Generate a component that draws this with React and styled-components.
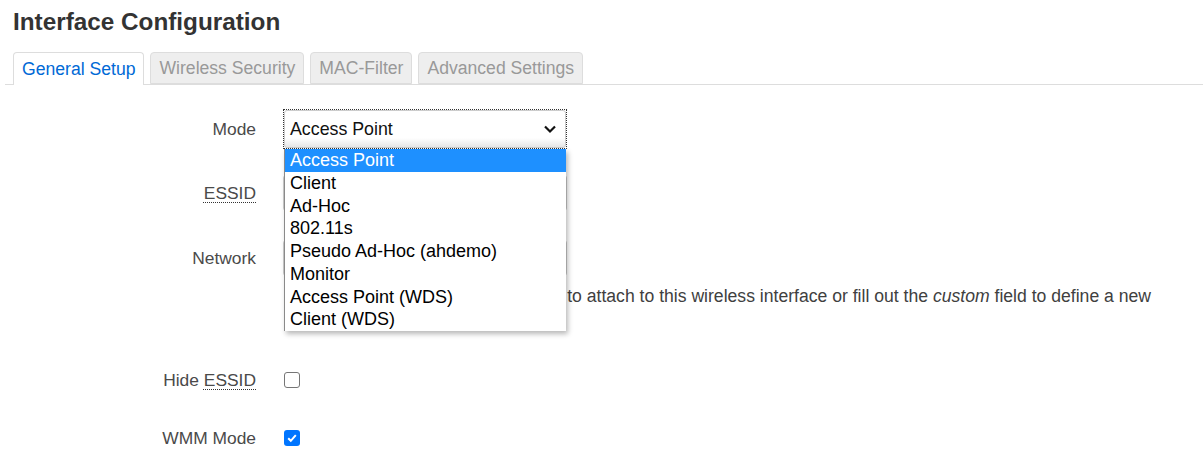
import React from "react";
import styled, { createGlobalStyle } from "styled-components";

const Global = createGlobalStyle`
  html, body { margin: 0; padding: 0; background: #fff; }
  body { font-family: "Liberation Sans", Arial, sans-serif; color: #404040; overflow: hidden; }
  * { box-sizing: border-box; }
`;

const Page = styled.div`
  width: 1203px;
  height: 459px;
  overflow: hidden;
`;

const Title = styled.h2`
  margin: 0;
  padding: 8px 0 0 13px;
  height: 52px;
  font-size: 24.3px;
  font-weight: bold;
  color: #333;
  line-height: 27px;
`;

const TabBar = styled.ul`
  list-style: none;
  margin: 0 0 0 5px;
  padding: 0 0 0 8px;
  display: flex;
  gap: 6px;
  border-bottom: 1px solid #ddd;
  height: 33px;
`;

const Tab = styled.li`
  height: ${(p) => (p.$active ? "33px" : "32px")};
  padding: 0 8px;
  display: flex;
  align-items: center;
  font-size: 17.6px;
  border: 1px solid #ddd;
  border-bottom: ${(p) => (p.$active ? "none" : "1px solid #ddd")};
  border-radius: 4px 4px 0 0;
  background: ${(p) => (p.$active ? "#fff" : "#eee")};
  color: ${(p) => (p.$active ? "#0069d6" : "#999")};
`;

const Form = styled.div`
  padding-top: 24px;
`;

const Row = styled.div`
  display: grid;
  grid-template-columns: 256px 1fr;
  column-gap: 27px;
  align-items: center;
  margin-top: ${(p) => p.$mt || 0}px;
  height: ${(p) => p.$h}px;
`;

const Label = styled.div`
  text-align: right;
  font-size: 17.4px;
  color: #4a4a4a;
`;

const Abbr = styled.span`
  text-decoration: underline dotted #333;
  text-underline-offset: 3px;
  text-decoration-thickness: 1px;
`;

const SelectWrap = styled.div`
  position: relative;
  width: 284px;
  height: 40px;
  outline: 1px dotted #333;
  outline-offset: -1px;
  padding: 1px;
`;

const SelectBox = styled.div`
  height: 100%;
  border: 1px solid #ccc;
  border-radius: 3px;
  background: linear-gradient(#fff 0%, #fff 75%, #e6e6e6 100%);
  display: flex;
  align-items: center;
  justify-content: space-between;
  padding: 0 8px 0 5px;
  font-size: 17.8px;
  color: #111;
`;

const Chevron = styled.svg`
  width: 14px;
  height: 10px;
`;

const Listbox = styled.ul`
  position: absolute;
  top: 40px;
  left: 1px;
  width: 282px;
  margin: 0;
  padding: 0;
  list-style: none;
  background: #fff;
  border-left: 1px solid #8a8a8a;
  box-shadow: 2px 3px 5px rgba(0, 0, 0, 0.28);
  z-index: 10;
`;

const Option = styled.li`
  height: 22.75px;
  line-height: 22.75px;
  padding-left: 5px;
  font-size: 18px;
  white-space: nowrap;
  background: ${(p) => (p.$selected ? "#1e90ff" : "transparent")};
  color: ${(p) => (p.$selected ? "#fff" : "#000")};
`;

const TextInput = styled.div`
  width: 284px;
  height: 36px;
  border: 1px solid #ccc;
  border-radius: 3px;
  background: #fff;
`;

const Description = styled.div`
  grid-column: 2;
  font-size: 17.6px;
  line-height: 22px;
  color: #404040;
  padding: 0 20px 0 27px;
`;

const Check = styled.span`
  width: 16px;
  height: 16px;
  margin-left: 1px;
  border-radius: 3px;
  display: inline-flex;
  align-items: center;
  justify-content: center;
  border: ${(p) => (p.$checked ? "none" : "1px solid #767676")};
  background: ${(p) => (p.$checked ? "#0075ff" : "#fff")};
`;

const options = [
  "Access Point",
  "Client",
  "Ad-Hoc",
  "802.11s",
  "Pseudo Ad-Hoc (ahdemo)",
  "Monitor",
  "Access Point (WDS)",
  "Client (WDS)",
];

export default function App() {
  return (
    <Page>
      <Global />
      <Title>Interface Configuration</Title>
      <TabBar>
        <Tab $active>General Setup</Tab>
        <Tab>Wireless Security</Tab>
        <Tab>MAC-Filter</Tab>
        <Tab>Advanced Settings</Tab>
      </TabBar>
      <Form>
        <Row $h={40}>
          <Label>Mode</Label>
          <SelectWrap>
            <SelectBox>
              <span>Access Point</span>
              <Chevron viewBox="0 0 14 10">
                <path d="M2 2.5 L7 7.5 L12 2.5" fill="none" stroke="#111" strokeWidth="2.2" />
              </Chevron>
            </SelectBox>
            <Listbox>
              {options.map((o, i) => (
                <Option key={o} $selected={i === 0}>{o}</Option>
              ))}
            </Listbox>
          </SelectWrap>
        </Row>
        <Row $h={36} $mt={26}>
          <Label><Abbr>ESSID</Abbr></Label>
          <TextInput />
        </Row>
        <Row $h={36} $mt={29}>
          <Label>Network</Label>
          <TextInput />
        </Row>
        <Row $mt={9}>
          <Description>
            Choose the network(s) you want to attach to this wireless interface or fill out the <em>custom</em> field to define a new network.
          </Description>
        </Row>
        <Row $h={36} $mt={33}>
          <Label>Hide <Abbr>ESSID</Abbr></Label>
          <Check />
        </Row>
        <Row $h={36} $mt={22}>
          <Label>WMM Mode</Label>
          <Check $checked>
            <svg width="12" height="12" viewBox="0 0 12 12">
              <path d="M2.2 6.2 L4.8 8.8 L9.8 3.2" fill="none" stroke="#fff" strokeWidth="2" />
            </svg>
          </Check>
        </Row>
      </Form>
    </Page>
  );
}
